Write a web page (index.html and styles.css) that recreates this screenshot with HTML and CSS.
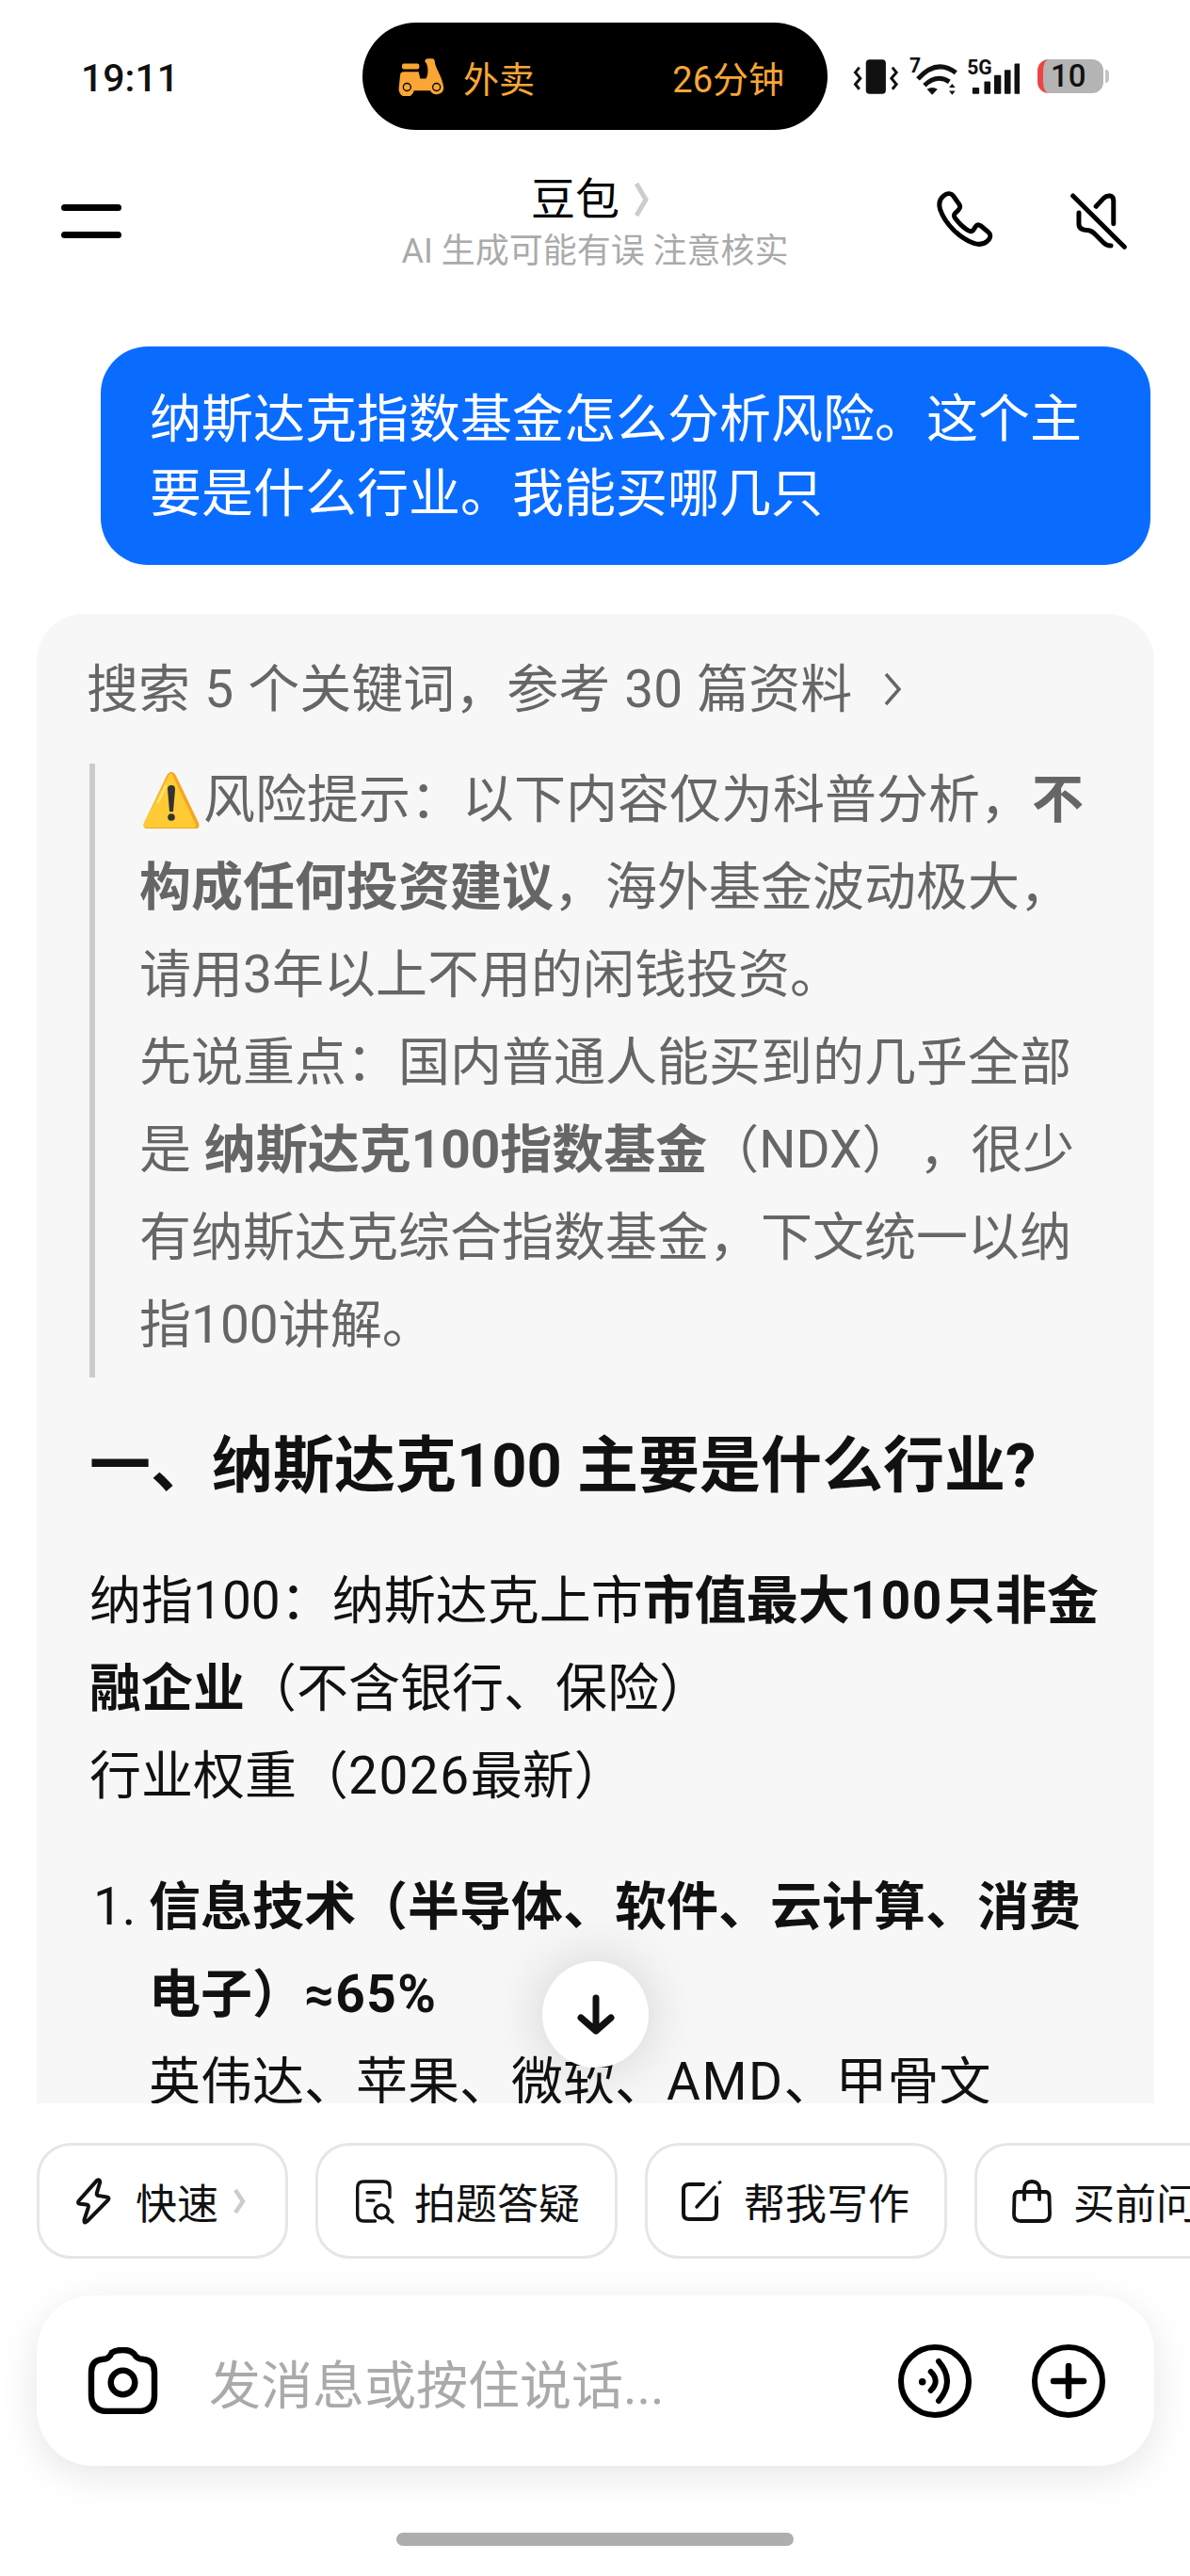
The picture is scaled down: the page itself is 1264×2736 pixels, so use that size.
FILE: index.html
```html
<!DOCTYPE html>
<html>
	<head>
		<meta charset="utf-8">
		<title>豆包</title>
		<link rel="stylesheet" href="styles.css">
	</head>
	<body>
		<div class="page">
			<!-- 状态栏 -->
			<div class="status">
				<div class="time">19:11</div>
				<div class="pill">
					<div class="pill-left">
						<svg class="scooter" viewBox="100 90 150 125">
							<rect x="112" y="112" width="55" height="18" rx="6" fill="#f9a635"/>
							<path d="M106 150Q106 138 118 138H165L170 160H188C196 150 196 125 190 112L185 106Q185 96 195 96H208Q216 96 216 104C218 130 240 150 245 190A23 23 0 0 1 202 198H150A23 23 0 0 1 102 190Z" fill="#f9a635"/>
							<circle cx="128" cy="187" r="12" fill="none" stroke="#000" stroke-width="4"/>
							<circle cx="222" cy="187" r="12" fill="none" stroke="#000" stroke-width="4"/>
						</svg>
						<span>外卖</span>
					</div>
					<span>26分钟</span>
				</div>
				<div class="status-right">
					<svg class="signals" viewBox="75 55 535 130">
						<rect x="118" y="65" width="64" height="110" rx="12" fill="#111"/>
						<path d="M97 90L84 106L100 125L84 144L97 160M203 90L216 106L200 125L216 144L203 160" fill="none" stroke="#111" stroke-width="9"/>
						<text x="258" y="105" class="sig-text">7</text>
						<path d="M285 127Q345 60 407 107M306 148Q345 110 386 136" fill="none" stroke="#111" stroke-width="15"/>
						<path d="M314 160Q332 150 348 160L331 178Z" fill="#111"/>
						<path d="M395 143L405 155H385ZM395 178L405 165H385Z" fill="#111"/>
						<text x="443" y="112" class="sig-text">5G</text>
						<rect x="460" y="155" width="22" height="20" rx="3" fill="#111"/>
						<rect x="498" y="135" width="20" height="40" rx="3" fill="#111"/>
						<rect x="530" y="115" width="22" height="60" rx="3" fill="#111"/>
						<rect x="563" y="98" width="20" height="77" rx="3" fill="#111"/>
						<rect x="595" y="78" width="20" height="97" rx="3" fill="#111"/>
					</svg>
					<div class="battery">10</div>
				</div>
			</div>

			<!-- 顶部导航 -->
			<div class="header">
				<div class="menu"><i></i><i></i></div>
				<div class="title">
					<div class="name">
						<span>豆包</span>
						<svg class="name-arrow" viewBox="0 0 18 40"><path d="M4 3L14 20L4 37" fill="none" stroke="#ccc" stroke-width="5"/></svg>
					</div>
					<div class="tip">AI 生成可能有误 注意核实</div>
				</div>
				<div class="actions">
					<svg class="act-icon" viewBox="100 70 190 190"><path d="M128 86C138 78 150 80 156 88L174 114C180 122 178 128 172 134L162 144C158 148 158 154 162 160C176 178 190 192 206 200C212 203 216 202 220 198L228 186C232 180 238 180 244 184L268 204C276 210 276 220 270 228C258 242 240 246 222 240C180 226 130 180 114 132C108 112 114 96 128 86Z" fill="none" stroke="#000" stroke-width="15"/></svg>
					<svg class="act-icon" viewBox="530 70 190 190"><path d="M538 88L703 252M612 122L636 96C648 84 668 84 668 104V178M557 142V178C557 192 566 198 584 198C596 198 602 204 612 214L636 238C642 244 650 248 660 248" fill="none" stroke="#000" stroke-width="15" stroke-linecap="round"/></svg>
				</div>
			</div>

			<!-- 对话区域 -->
			<div class="chat">
				<div class="bubble">纳斯达克指数基金怎么分析风险。这个主<br>要是什么行业。我能买哪几只</div>
				<div class="card">
					<div class="search">
						<span>搜索 5 个关键词，参考 30 篇资料</span>
						<svg class="search-arrow" viewBox="0 0 20 38"><path d="M3 3L17 19L3 35" fill="none" stroke="#666" stroke-width="3.5"/></svg>
					</div>
					<div class="quote">
						<p>
							<svg class="warn" viewBox="0 0 60 62">
								<path d="M30 1Q33 1 35 5L59 55Q61 61 55 61H5Q-1 61 1 55L25 5Q27 1 30 1Z" fill="#f6a623"/>
								<path d="M28 3L1 55Q-1 60 5 60H53Q57 60 55 55L32 6Q30 1 28 3Z" fill="#ffca33"/>
								<path d="M24 16L16 33" fill="none" stroke="#ffe27a" stroke-width="2.5" stroke-linecap="round"/>
								<path d="M26 19Q26 15 30 15Q34 15 34 19L32 43H28Z" fill="#333"/>
								<circle cx="30" cy="49" r="3.8" fill="#333"/>
							</svg>风险提示：以下内容仅为科普分析，<b>不<br>构成任何投资建议</b>，海外基金波动极大，<br>请用3年以上不用的闲钱投资。<br>先说重点：国内普通人能买到的几乎全部<br>是 <b>纳斯达克100指数基金</b>（NDX）&#8202;，很少<br>有纳斯达克综合指数基金，下文统一以纳<br>指100讲解。
						</p>
					</div>
					<h2>一、纳斯达克100 主要是什么行业?</h2>
					<p class="para">纳指100：纳斯达克上市<b>市值最大<span class="num">100</span>只非金<br>融企业</b>（不含银行、保险）<br>行业权重（<span class="num">2026</span>最新）</p>
					<ol class="list">
						<li><b>信息技术（半导体、软件、云计算、消费<br>电子）<span class="num">≈65%</span></b><br>英伟达、苹果、微软、<span class="num">AMD</span>、甲骨文</li>
					</ol>
				</div>
				<div class="down">
					<svg viewBox="0 0 46 46"><path d="M23 5V40M7 26L23 40L39 26" fill="none" stroke="#111" stroke-width="7" stroke-linecap="round" stroke-linejoin="round"/></svg>
				</div>
			</div>

			<!-- 快捷入口 -->
			<div class="chips">
				<div class="chip">
					<svg class="chip-icon" viewBox="160 125 125 155"><path d="M232 136Q240 132 241 142L231 176Q229 184 238 185L262 189Q273 191 266 199L200 266Q190 274 191 262L204 222Q206 214 198 213L178 211Q168 209 174 201Z" fill="none" stroke="#111" stroke-width="12" stroke-linejoin="round"/></svg>
					<span>快速</span>
					<svg class="chip-arrow" viewBox="0 0 14 30"><path d="M3 3L11 15L3 27" fill="none" stroke="#ccc" stroke-width="4.5"/></svg>
				</div>
				<div class="chip">
					<svg class="chip-icon" viewBox="1040 130 125 145"><path d="M1110 265H1075Q1054 265 1054 245V160Q1054 140 1075 140H1135Q1156 140 1156 160V190M1085 175H1125M1085 200H1105M1147 252L1165 268" fill="none" stroke="#111" stroke-width="10" stroke-linecap="round"/><circle cx="1130" cy="235" r="21" fill="none" stroke="#111" stroke-width="10"/></svg>
					<span>拍题答疑</span>
				</div>
				<div class="chip">
					<svg class="chip-icon" viewBox="2 0 42 46"><path d="M24 5H9Q3 5 3 11V36Q3 42 9 42H32Q38 42 38 36V19" fill="none" stroke="#111" stroke-width="4" stroke-linecap="round"/><path d="M17 29L36 8" fill="none" stroke="#111" stroke-width="3.5" stroke-linecap="round"/><path d="M40 4L43 2" fill="none" stroke="#111" stroke-width="3"/></svg>
					<span>帮我写作</span>
				</div>
				<div class="chip">
					<svg class="chip-icon" viewBox="0 0 42 48"><path d="M7 14H35Q39 14 39.5 18L40 38Q40 45 33 45H9Q2 45 2 38L2.5 18Q3 14 7 14ZM13 22V11Q13 3 21 3Q29 3 29 11V22" fill="none" stroke="#111" stroke-width="3.8" stroke-linecap="round"/></svg>
					<span>买前问问</span>
				</div>
			</div>

			<!-- 输入框 -->
			<div class="input">
				<svg class="camera" viewBox="0 0 76 72"><path d="M26 6Q30 3 38 3Q46 3 50 7Q53 13 60 13Q72 14 72 27V52Q72 68 56 69H20Q4 68 4 52V27Q4 14 16 13Q23 13 26 6Z" fill="none" stroke="#000" stroke-width="6.5"/><circle cx="38" cy="38" r="13" fill="none" stroke="#000" stroke-width="6.5"/></svg>
				<div class="holder">发消息或按住说话...</div>
				<svg class="round-icon" viewBox="0 0 78 78"><circle cx="39" cy="39" r="36" fill="none" stroke="#000" stroke-width="6"/><circle cx="25.7" cy="39.7" r="3.8"/><path d="M34.7 29Q44.7 39 34.7 49M43 18Q61 39 43 60" fill="none" stroke="#000" stroke-width="6" stroke-linecap="round"/></svg>
				<svg class="round-icon" viewBox="0 0 78 78"><circle cx="39" cy="39" r="36" fill="none" stroke="#000" stroke-width="6"/><path d="M23 39H55M39 23V55" fill="none" stroke="#000" stroke-width="6.5" stroke-linecap="round"/></svg>
			</div>

			<div class="home-bar"></div>
		</div>
	</body>
</html>
```

FILE: styles.css
```css
*{
	margin: 0;
	padding: 0;
	box-sizing: border-box;
}
body{
	background-color: #fff;
	font-family: Roboto, "Noto Sans CJK SC", sans-serif;
	color: #111;
}
.page{
	width: 1264px;
	height: 2736px;
	overflow: hidden;
}

/* 状态栏 */
.status{
	display: grid;
	grid-template-columns: 1fr auto 1fr;
	align-items: center;
	height: 138px;
	padding-top: 24px;
}
.time{
	padding-left: 86px;
	font-size: 41px;
	font-weight: 500;
	margin-top: 4px;
}
.pill{
	width: 494px;
	height: 114px;
	padding: 0 46px 0 38px;
	border-radius: 57px;
	background-color: #000;
	color: #f9a635;
	font-size: 38px;
	display: flex;
	justify-content: space-between;
	align-items: center;
}
.pill-left{
	display: flex;
	align-items: center;
	gap: 19px;
}
.scooter{
	width: 50px;
	height: 42px;
}
.status-right{
	display: flex;
	align-items: center;
	padding-left: 26px;
}
.signals{
	width: 178px;
	height: 43px;
}
.sig-text{
	font-size: 64px;
	font-weight: 700;
	fill: #111;
}
.battery{
	position: relative;
	width: 70px;
	height: 36px;
	margin-left: 19px;
	padding-left: 8px;
	border-left: 6px solid #ee4444;
	border-radius: 12px;
	background-color: #b4b4b4;
	font-size: 33px;
	font-weight: 500;
	line-height: 36px;
}
.battery::after{
	content: "";
	position: absolute;
	right: -6px;
	top: 11px;
	width: 4px;
	height: 14px;
	border-radius: 0 6px 6px 0;
	background-color: #c4c4c4;
}

/* 顶部导航 */
.header{
	display: grid;
	grid-template-columns: 1fr auto 1fr;
	align-items: center;
	height: 170px;
}
.menu{
	padding-left: 65px;
	margin-top: 24px;
}
.menu i{
	display: block;
	width: 64px;
	height: 7px;
	margin-bottom: 22px;
	border-radius: 4px;
	background-color: #000;
}
.menu i:last-child{
	margin-bottom: 0;
}
.title{
	text-align: center;
	margin-top: 29px;
}
.name{
	display: flex;
	justify-content: center;
	align-items: center;
	gap: 14px;
	font-size: 47px;
	line-height: 60px;
	padding-right: 10px;
	color: #000;
}
.name-arrow{
	width: 18px;
	height: 40px;
}
.tip{
	font-size: 36px;
	line-height: 51px;
	color: #aaa;
}
.actions{
	display: flex;
	justify-content: flex-end;
	gap: 80px;
	padding-right: 64px;
	margin-top: 20px;
}
.act-icon{
	width: 63px;
	height: 63px;
}

/* 对话区域 */
.chat{
	position: relative;
	height: 1926px;
	padding: 60px 38px 0 39px;
	overflow: hidden;
}
.bubble{
	margin: 0 4px 0 68px;
	padding: 38px 20px 36px 52px;
	border-radius: 50px;
	background-color: #0a6cff;
	color: #fff;
	font-size: 55px;
	line-height: 79px;
}
.card{
	margin-top: 52px;
	padding: 50px 0 120px 53px;
	border-radius: 50px;
	background-color: #f7f7f7;
	font-size: 55px;
	line-height: 93px;
}
.search{
	display: flex;
	align-items: center;
	gap: 33px;
	font-size: 55px;
	word-spacing: 1.5px;
	line-height: 60px;
	color: #666;
}
.search-arrow{
	width: 20px;
	height: 38px;
}
.quote{
	display: flow-root;
	margin: 49px 0 0 3px;
	padding: 0 0 9px 47px;
	border-left: 6px solid #ccc;
	color: #666;
}
.quote p{
	margin-top: -8px;
	white-space: nowrap;
}
.warn{
	width: 60px;
	height: 62px;
	margin: 0 4px 0 4px;
	vertical-align: -13px;
}
h2{
	margin: 54px 0 57px 3px;
	font-size: 65px;
	font-weight: 700;
	line-height: 80px;
}
.para{
	margin-left: 3px;
	white-space: nowrap;
}
.num{
	letter-spacing: 1.5px;
}
.list{
	margin: 46px 0 0 3px;
	padding-left: 63px;
	white-space: nowrap;
}
.down{
	position: absolute;
	left: 576px;
	top: 1775px;
	width: 113px;
	height: 113px;
	border-radius: 50%;
	background-color: #fff;
	box-shadow: 0 0 60px rgba(0,0,0,0.16);
	display: flex;
	justify-content: center;
	align-items: center;
}
.down svg{
	width: 46px;
	height: 46px;
}

/* 快捷入口 */
.chips{
	display: flex;
	gap: 29px;
	margin-top: 42px;
	padding-left: 39px;
	overflow: hidden;
}
.chip{
	flex-shrink: 0;
	display: flex;
	align-items: center;
	gap: 23px;
	height: 123px;
	padding: 0 37px;
	border: 3px solid #e6e6e6;
	border-radius: 36px;
	font-size: 44px;
}
.chip-icon{
	width: 42px;
	height: 52px;
	overflow: visible;
}
.chip-arrow{
	width: 14px;
	height: 30px;
	margin: 0 5px 0 -8px;
}

/* 输入框 */
.input{
	display: flex;
	align-items: center;
	height: 181px;
	margin: 39px 38px 0 39px;
	padding: 0 52px 0 54px;
	border-radius: 60px;
	background-color: #fff;
	box-shadow: 0 10px 40px rgba(0,0,0,0.1);
}
.camera{
	width: 75px;
	height: 71px;
}
.holder{
	flex: 1;
	margin-left: 54px;
	font-size: 55px;
	color: #aaa;
}
.round-icon{
	width: 78px;
	height: 78px;
	margin-left: 64px;
}
.home-bar{
	width: 422px;
	height: 14px;
	margin: 71px auto 0;
	border-radius: 7px;
	background-color: #aeaeae;
}
```
